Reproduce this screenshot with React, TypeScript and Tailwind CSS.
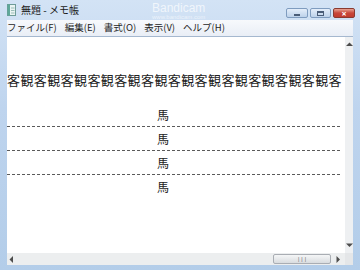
import React from "react";

const jp = "font-['Noto_Sans_CJK_JP','Noto_Sans',sans-serif]";

function Dashes() {
  return (
    <div className="h-px w-[334px] bg-[repeating-linear-gradient(90deg,#5a5a5a_0_3px,transparent_3px_5px)]" />
  );
}

function NotepadIcon() {
  return (
    <svg width="9" height="12" viewBox="0 0 9 12">
      <rect x="0.5" y="0.5" width="8" height="11" fill="#eaf4f2" stroke="#6f9c98" />
      <rect x="0.5" y="0.5" width="2.5" height="11" fill="#5fa89a" />
      <line x1="4" y1="4" x2="7.5" y2="4" stroke="#9bbdb8" />
      <line x1="4" y1="6.5" x2="7.5" y2="6.5" stroke="#9bbdb8" />
      <line x1="4" y1="9" x2="7.5" y2="9" stroke="#9bbdb8" />
    </svg>
  );
}

function Arrow({ dir }: { dir: "up" | "down" | "left" | "right" }) {
  const pts = {
    up: "0,4 3.5,0.5 7,4",
    down: "0,0.5 3.5,4 7,0.5",
    left: "4,0 0.5,3.5 4,7",
    right: "0.5,0 4,3.5 0.5,7",
  }[dir];
  const vertical = dir === "up" || dir === "down";
  return (
    <svg width={vertical ? 7 : 5} height={vertical ? 5 : 7} viewBox={vertical ? "0 0 7 5" : "0 0 5 7"}>
      <polygon points={pts} fill="#4d4d4d" />
    </svg>
  );
}

const menus = ["ファイル(F)", "編集(E)", "書式(O)", "表示(V)", "ヘルプ(H)"];

export default function App() {
  const line = "客観".repeat(12) + "客";

  return (
    <div className="flex h-[270px] w-[360px] flex-col overflow-hidden bg-[linear-gradient(180deg,#d3e3f5_0%,#bed4ee_40%,#b3cde9_100%)]">
      {/* title bar */}
      <div className="relative flex h-[20px] shrink-0 items-center pl-[7px]">
        <NotepadIcon />
        <span className={`${jp} ml-[5px] text-[10px] leading-none text-[#1a1a1a]`}>無題 - メモ帳</span>
        <div className="absolute left-[152px] top-[2px] flex flex-col items-center leading-none">
          <span className="font-['Liberation_Sans',sans-serif] text-[12px] text-white/70">Bandicam</span>
          <span className="font-['Liberation_Sans',sans-serif] text-[6px] text-white/60">www.bandicam.com</span>
        </div>
        <div className="ml-auto mr-[5px] mt-[6px] flex gap-[2px]">
          <div className="flex h-[10px] w-[22px] items-center justify-center rounded-[2px] border border-[#7f9cbf] bg-[linear-gradient(180deg,#e4eefa,#bdd2ea)]">
            <div className="mt-[3px] h-[2px] w-[6px] bg-[#4a5d78]" />
          </div>
          <div className="flex h-[10px] w-[21px] items-center justify-center rounded-[2px] border border-[#7f9cbf] bg-[linear-gradient(180deg,#e4eefa,#bdd2ea)]">
            <div className="h-[5px] w-[7px] border border-t-2 border-[#4a5d78]" />
          </div>
          <div className="flex h-[10px] w-[22px] items-center justify-center rounded-[2px] border border-[#8a3a30] bg-[linear-gradient(180deg,#e8a393,#c8473a_50%,#c23c2f)] text-[9px] font-bold leading-none text-white">
            ×
          </div>
        </div>
      </div>

      {/* menu bar */}
      <div className={`${jp} mx-[7px] flex h-[16px] shrink-0 items-center gap-[8px] bg-[linear-gradient(180deg,#f7f9fc,#e9eef6)] text-[9.5px] leading-none text-[#1e1e1e]`}>
        {menus.map((m) => (
          <span key={m}>{m}</span>
        ))}
      </div>

      {/* editor */}
      <div className="mx-[7px] flex min-h-0 flex-1 border-t border-[#a5b8cf] bg-white">
        <div className={`${jp} flex flex-1 flex-col overflow-hidden text-[#222]`}>
          <div className="mt-[31px] h-[24px] whitespace-nowrap text-[13px] leading-[24px] tracking-[0.4px]">
            {line}
          </div>
          <div className="mt-[11px] flex flex-col">
            {[0, 1, 2, 3].map((i) => (
              <div key={i} className="flex flex-col">
                <div className="flex h-[23px] items-center pl-[150px] text-[12px] leading-none">馬</div>
                {i < 3 && <Dashes />}
              </div>
            ))}
          </div>
        </div>
        {/* vertical scrollbar */}
        <div className="flex w-[8px] shrink-0 flex-col items-center justify-between bg-[#eef0f2] py-[5px]">
          <Arrow dir="up" />
          <Arrow dir="down" />
        </div>
      </div>

      {/* horizontal scrollbar */}
      <div className="mx-[7px] flex h-[12px] shrink-0 items-center bg-[#eceeef]">
        <div className="ml-[2px] w-[8px]">
          <Arrow dir="left" />
        </div>
        <div className="ml-[256px] flex h-[10px] w-[58px] items-center justify-center rounded-[2px] border border-[#a9adb3] bg-[linear-gradient(180deg,#f5f6f7,#d9dcdf)] text-[6px] leading-none text-[#666]">
          |||
        </div>
        <div className="ml-[5px]">
          <Arrow dir="right" />
        </div>
        <div className="ml-auto h-full w-[8px] bg-[#e4e6e8]" />
      </div>
      <div className="h-[5px] shrink-0" />
    </div>
  );
}
